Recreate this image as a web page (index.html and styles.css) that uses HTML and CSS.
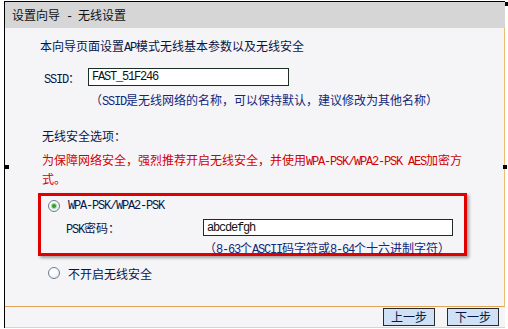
FILE: index.html
```html
<!DOCTYPE html>
<html>
<head>
  <meta charset="utf-8">
  <title>设置向导 - 无线设置</title>
  <link rel="stylesheet" href="styles.css">
</head>
<body>
  <div class="frame">
    <div class="head">设置向导<span class="en"> - </span>无线设置</div>

    <div class="main">
      <p class="intro">本向导页面设置<span class="en">AP</span>模式无线基本参数以及无线安全</p>

      <div class="row ssid-row">
        <label class="ssid-label"><span class="en">SSID</span>：</label>
        <input class="text-input ssid-input en" type="text" value="FAST_51F246">
      </div>
      <p class="hint ssid-hint">（<span class="en">SSID</span>是无线网络的名称，可以保持默认，建议修改为其他名称）</p>

      <p class="section-title">无线安全选项：</p>
      <p class="warn">为保障网络安全，强烈推荐开启无线安全，并使用<span class="en">WPA-PSK/WPA2-PSK AES</span>加密方<br>式。</p>

      <div class="secure-box">
        <div class="radio-row">
          <span class="radio checked"></span>
          <span class="en">WPA-PSK/WPA2-PSK</span>
        </div>
        <div class="row psk-row">
          <label class="psk-label"><span class="en">PSK</span>密码：</label>
          <input class="text-input psk-input en" type="text" value="abcdefgh">
        </div>
        <p class="hint psk-hint">（<span class="en">8-63</span>个<span class="en">ASCII</span>码字符或<span class="en">8-64</span>个十六进制字符）</p>
      </div>

      <div class="radio-row off-row">
        <span class="radio"></span>
        <span>不开启无线安全</span>
      </div>
    </div>

    <div class="foot">
      <button class="step-btn">上一步</button>
      <button class="step-btn">下一步</button>
    </div>

    <span class="handle handle-tr"></span>
    <span class="handle handle-ml"></span>
    <span class="handle handle-mr"></span>
  </div>
</body>
</html>
```

FILE: styles.css
```css
body {
  margin: 0;
  padding-top: 1px;
  background: #fff;
  font-family: "Noto Sans CJK SC", sans-serif;
  font-size: 12px;
  color: #0a1546;
}
p {
  margin: 0;
}
.en {
  font-family: "Liberation Mono", monospace;
  font-size: 12px;
  line-height: 1;
  letter-spacing: -1.2px;
  padding-right: 1px;
  margin-right: -1px;
}
.frame {
  position: relative;
  margin-left: 4px;
  width: 500px;
  border-left: 1px solid #000;
  border-top: 1px solid #000;
  display: flex;
  flex-direction: column;
}
.head {
  height: 26px;
  line-height: 26px;
  padding-left: 7px;
  background: #d6d6d6;
  color: #111;
}
.main {
  box-sizing: border-box;
  height: 279px;
  padding-left: 33px;
  background: #f5f5f8;
  border-right: 1px solid #e8c070;
  border-bottom: 1px solid #e2a458;
}
.intro {
  margin: 9px 0 0 2px;
  line-height: 18px;
}
.row {
  display: flex;
  align-items: center;
}
.ssid-row {
  margin-top: 13px;
  height: 18px;
}
.ssid-label {
  box-sizing: border-box;
  width: 50px;
  padding-left: 6px;
}
.text-input {
  box-sizing: border-box;
  margin: 0;
  padding: 0 3px;
  border: 1px solid #1c2e22;
  background: #fff;
  color: #111;
  outline: none;
}
.ssid-input {
  width: 201px;
  height: 18px;
}
.hint {
  line-height: 18px;
  color: #12287a;
}
.ssid-hint {
  margin-top: 5px;
  padding-left: 52px;
}
.section-title {
  margin-top: 18px;
  padding-left: 4px;
  line-height: 18px;
}
.warn {
  margin-top: 5px;
  padding-left: 4px;
  line-height: 19px;
  color: #d20000;
}
.secure-box {
  box-sizing: border-box;
  margin-top: 5px;
  width: 429px;
  height: 63px;
  border: 3px solid #e00000;
  box-shadow: 2px 2px 3px rgba(0, 0, 0, 0.35);
}
.radio-row {
  display: flex;
  align-items: center;
  gap: 8px;
  height: 16px;
}
.secure-box .radio-row {
  margin-top: 2px;
  padding-left: 7px;
}
.radio {
  box-sizing: border-box;
  width: 12px;
  height: 12px;
  border-radius: 50%;
  border: 1px solid #6d7c92;
  background: radial-gradient(circle at 40% 35%, #fff 30%, #dde2ea 100%);
  display: flex;
  align-items: center;
  justify-content: center;
}
.radio.checked::after {
  content: "";
  width: 4px;
  height: 4px;
  border-radius: 50%;
  background: #3a9a2e;
  box-shadow: 0 0 0 1px #a8dca0;
}
.psk-row {
  margin-top: 5px;
  height: 17px;
}
.psk-label {
  box-sizing: border-box;
  width: 162px;
  padding-left: 25px;
}
.psk-input {
  width: 250px;
  height: 17px;
}
.psk-hint {
  margin-top: 4px;
  padding-left: 163px;
  line-height: 16px;
}
.off-row {
  margin-top: 9px;
  padding-left: 10px;
}
.foot {
  box-sizing: border-box;
  height: 21px;
  padding: 1px 6px 0 0;
  display: flex;
  justify-content: flex-end;
  gap: 12px;
  background: #f5f5f8;
  border-bottom: 1px solid #c5d9ee;
}
.step-btn {
  box-sizing: border-box;
  width: 52px;
  height: 18px;
  padding: 0;
  border: 1px solid #2a2a2a;
  background: #cfe1f5;
  font-family: "Noto Sans CJK SC", sans-serif;
  font-size: 12px;
  line-height: 16px;
  color: #0a1546;
}
.handle {
  position: absolute;
  width: 4px;
  height: 4px;
  background: #000;
}
.handle-tr {
  top: 0;
  right: -4px;
}
.handle-ml {
  top: 163px;
  left: 0;
}
.handle-mr {
  top: 163px;
  right: -2px;
}
```
